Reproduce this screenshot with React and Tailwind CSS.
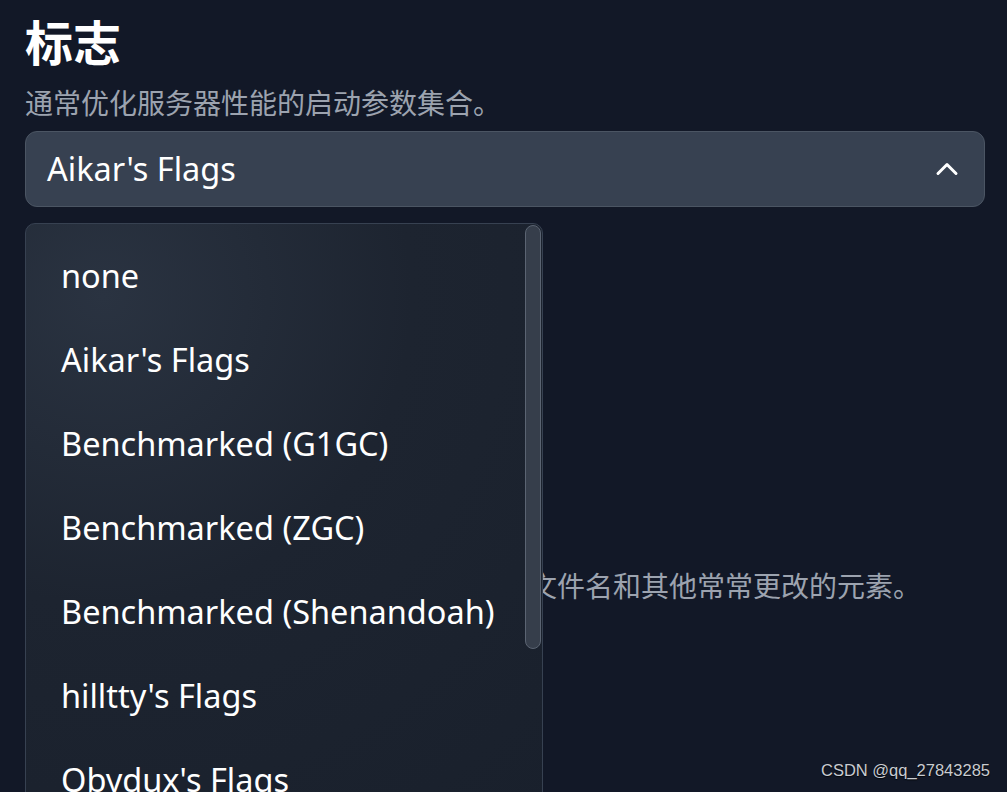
import { ChevronUp } from 'lucide-react'

const options = [
  'none',
  "Aikar's Flags",
  'Benchmarked (G1GC)',
  'Benchmarked (ZGC)',
  'Benchmarked (Shenandoah)',
  "hilltty's Flags",
  "Obydux's Flags",
  "Etil's Flags",
]

export default function App() {
  return (
    <div
      className="relative h-[792px] w-[1007px] overflow-hidden bg-[#121827] text-white"
      style={{ fontFamily: '"Noto Sans", "Noto Sans CJK SC", sans-serif' }}
    >
      <div className="flex flex-col pl-[25px] pr-[22px] pt-[12px]">
        {/* Flags section */}
        <h1 className="text-[48px] font-bold leading-[62px]">标志</h1>
        <p className="mt-[12px] text-[28px] leading-[34px] text-[#9ca3af]">通常优化服务器性能的启动参数集合。</p>

        <div className="relative mt-[11px]">
          <button className="flex h-[76px] w-full items-center justify-between rounded-[12px] border border-[#4b5563] bg-[#374151] pl-[21px] pr-[19px] text-left">
            <span className="text-[32.5px] leading-none">Aikar's Flags</span>
            <ChevronUp className="h-[36px] w-[36px] text-white" strokeWidth={2} />
          </button>

          {/* Open menu */}
          <div className="absolute left-0 top-[92px] z-10 h-[600px] w-[518px] overflow-hidden rounded-[10px] border border-[#374151] bg-[radial-gradient(circle_at_15%_12%,#2a3341_0%,#1d2430_45%,#19202c_100%)]">
            <ul className="flex flex-col pt-[10px]">
              {options.map((opt) => (
                <li key={opt} className="flex h-[84px] items-center pl-[35px] text-[32.5px] leading-none text-white">
                  {opt}
                </li>
              ))}
            </ul>
            <div className="absolute right-[1px] top-[1px] h-[424px] w-[16px] rounded-[8px] border border-[#5b6472] bg-[#363e4b]" />
          </div>
        </div>

        {/* Variables section (behind menu) */}
        <h2 className="mt-[298px] text-[48px] font-bold leading-[62px]">变量</h2>
        <p className="mt-[2px] text-[28px] leading-[34px] text-[#9ca3af]">服务器启动命令中使用的变量，用于替换文件名和其他常常更改的元素。</p>
      </div>

      <div
        className="absolute bottom-[9px] right-[17px] text-[16.5px] text-[#c9ccd1]"
        style={{ fontFamily: '"Liberation Sans", Arial, sans-serif', textShadow: '0 1px 1px rgba(0,0,0,0.8)' }}
      >
        CSDN @qq_27843285
      </div>
    </div>
  )
}
